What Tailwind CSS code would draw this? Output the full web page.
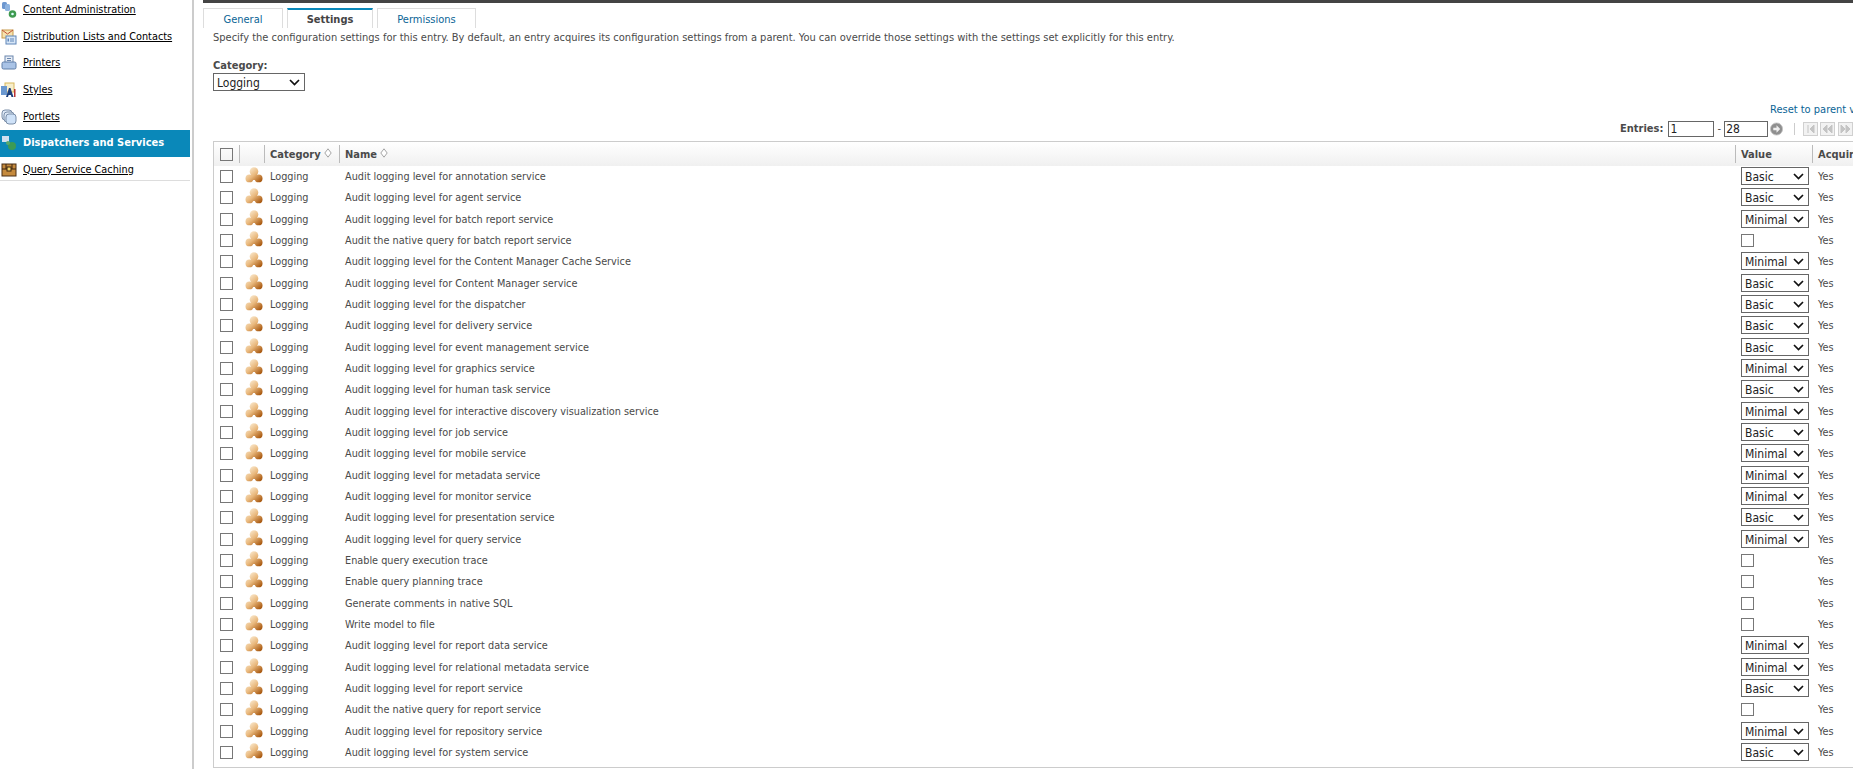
<!DOCTYPE html>
<html><head><meta charset="utf-8"><title>Settings</title>
<script src="https://cdn.jsdelivr.net/npm/@tailwindcss/browser@4"></script></head>
<body class="bg-white w-[1853px] h-[769px] overflow-hidden [font-family:'DejaVu_Sans_Condensed','DejaVu_Sans',sans-serif] text-[11px] text-[#4a4a4a]">
<svg width="0" height="0" class="absolute">
<defs>
<linearGradient id="o" gradientUnits="userSpaceOnUse" x1="3" y1="1" x2="15" y2="15"><stop offset="0" stop-color="#fcefd8"/><stop offset=".5" stop-color="#e9b87c"/><stop offset="1" stop-color="#a8580f"/></linearGradient>
<symbol id="entry" viewBox="0 0 18 16"><g fill="url(#o)"><circle cx="9" cy="4.500" r="4.300"/><circle cx="4.400" cy="11.400" r="3.900"/><circle cx="13.600" cy="11.400" r="3.900"/><path d="M6 7h6l1 6H5Z"/></g></symbol>
<symbol id="sort" viewBox="0 0 8 10"><path d="M4 .8 7.200 5 4 9.200 .8 5Z" fill="#fff" stroke="#a5a5a5"/></symbol>
<symbol id="chev" viewBox="0 0 11 7"><path d="M1 1l4.500 4.500L10 1" fill="none" stroke="#111" stroke-width="1.700"/></symbol>
</defs></svg>
<div class="flex h-full">
<aside class="w-[192px] shrink-0 text-black">
  <nav class="h-[184px] border-b border-[#ddd] w-[190px] text-[10.8px] [&>a]:flex [&>a]:items-center [&>a]:h-[26.6px] [&>a]:pl-[23px] [&>a]:relative [&_svg]:absolute [&_svg]:left-[1px] [&_svg]:w-[16px] [&_svg]:h-[16px] [&_span]:underline">
    <a class="-mt-[3px]"><svg viewBox="0 0 16 16"><rect x="1" y="0" width="5" height="7" rx="1.500" fill="#6d97cf"/><rect x="4" y="2" width="5" height="7" rx="1.500" fill="#8fb4e0"/><circle cx="11.500" cy="12" r="3.800" fill="#3f9a4f"/><circle cx="11.500" cy="12" r="1.300" fill="#dff"/></svg><span>Content Administration</span></a>
    <a><svg viewBox="0 0 16 16"><rect x="1" y="1" width="11" height="8" fill="#f7e3ae" stroke="#c79a4a"/><path d="M1 1l5.500 4L12 1" fill="none" stroke="#c0523a"/><rect x="5" y="7" width="10" height="8" fill="#d7e6f7" stroke="#5f86b8"/><path d="M9 10h4M9 12h4" stroke="#5f86b8"/><rect x="6.500" y="9.500" width="1.500" height="3" fill="#5f86b8"/></svg><span>Distribution Lists and Contacts</span></a>
    <a><svg viewBox="0 0 16 16"><rect x="4" y="1" width="8" height="7" fill="#e8eef7" stroke="#6a86ad"/><path d="M6 3.500h4M6 5.500h4" stroke="#6a86ad"/><rect x="1" y="7" width="14" height="7" rx="1.500" fill="#a9c3e6" stroke="#5f7ea8"/></svg><span>Printers</span></a>
    <a><svg viewBox="0 0 16 16"><rect x="4" y="1" width="9" height="9" fill="#f7eecb" stroke="#d9b75a"/><rect x="0" y="4" width="6" height="9" fill="#6b98cf"/><path d="M5 15l3-9h1.500l3 9h-2l-.6-2H7.600L7 15Z" fill="#1c3e7a"/><rect x="13" y="7" width="1.500" height="8" fill="#b33"/></svg><span>Styles</span></a>
    <a><svg viewBox="0 0 16 16"><rect x="1" y="1" width="10" height="10" rx="3" fill="#dde8f6" stroke="#7b8fa9"/><rect x="3" y="3" width="10" height="10" rx="3" fill="#dde8f6" stroke="#7b8fa9"/><rect x="5" y="5" width="10" height="10" rx="3" fill="#cfe2f8" stroke="#7b8fa9"/></svg><span>Portlets</span></a>
    <a class="bg-[#0a88b9] text-white pl-[24px] text-[11px]"><svg viewBox="0 0 16 16"><rect x="1" y="1" width="7" height="6" fill="#cfe0f0"/><circle cx="11" cy="11" r="4" fill="#3c9a55"/><circle cx="7" cy="8" r="2" fill="#59a86b"/></svg><b class="font-bold">Dispatchers and Services</b></a>
    <a><svg viewBox="0 0 16 16"><rect x="1" y="2" width="14" height="12" fill="#c58a3d" stroke="#4a2f14"/><path d="M1 7h14M5 2v5M11 2v5" stroke="#3b2410"/><rect x="6" y="5" width="4" height="4" fill="#f3d36a" stroke="#3b2410"/></svg><span>Query Service Caching</span></a>
  </nav>
</aside>
<div class="w-[2px] h-full bg-[#ccc] shrink-0"></div>
<main class="flex-1 min-w-0 pl-[9px]">
  <div class="h-[3px] bg-[#444]"></div>
  <div class="flex gap-[4px] mt-[5px] h-[20px] text-center text-[#0a6496]">
    <a class="w-[80px] border border-b-0 border-[#ddd] leading-[21px]">General</a>
    <a class="w-[86px] border border-b-0 border-[#ddd] border-t-2 border-t-[#0a88b9] font-bold text-[#444] leading-[20px] bg-white">Settings</a>
    <a class="w-[99px] border border-b-0 border-[#ddd] leading-[21px]">Permissions</a>
  </div>
  <div class="pl-[10px]">
    <p class="h-[16px] mt-[2px] leading-[16px]">Specify the configuration settings for this entry. By default, an entry acquires its configuration settings from a parent. You can override those settings with the settings set explicitly for this entry.</p>
    <p class="mt-[13px] h-[14px] leading-[14px] font-bold">Category:</p>
    <span class="relative block w-[92px] h-[18px]"><select class="appearance-none w-full h-full border border-[#666] pl-[3px] text-[12px] text-[#222] bg-white"><option>Logging</option></select><svg class="absolute right-[5px] top-[6px] w-[11px] h-[7px]"><use href="#chev"/></svg></span>
    <div class="h-[13px] mt-[12px] pl-[1557px] whitespace-nowrap text-[#0a6496] leading-[13px]">Reset to parent value</div>
    <div class="flex items-center h-[16px] mt-[5px] pl-[1407px] whitespace-nowrap">
      <b class="font-bold">Entries:</b>
      <input value="1" class="ml-[5px] w-[46px] h-[16px] border border-[#666] pl-[1px] text-[12px] text-[#222]">
      <span class="w-[12px] text-center">-</span>
      <input value="28" class="w-[44px] h-[16px] border border-[#666] pl-[1px] text-[12px] text-[#222]">
      <svg class="ml-[2px]" width="16" height="16" viewBox="0 0 16 16"><circle cx="8" cy="8" r="7.500" fill="#8f8f8f" stroke="#c4c4c4"/><path d="M4 6.500h4V3.500l4.500 4.500L8 12.500v-3H4Z" fill="#eee"/></svg>
      <span class="ml-[11px] w-px h-[12px] bg-[#ccc]"></span>
      <svg class="ml-[8px] shrink-0" width="50" height="14" viewBox="0 0 50 14"><g fill="#f2f2f2" stroke="#d0d0d0"><rect x=".5" y=".5" width="14" height="13"/><rect x="17.500" y=".5" width="14" height="13"/><rect x="35.500" y=".5" width="14" height="13"/></g><path d="M5 3v8M11 3l-4 4 4 4ZM24 3l-4 4 4 4ZM29 3l-4 4 4 4ZM38 3l4 4-4 4ZM43 3l4 4-4 4Z" fill="#c4c4c4" stroke="#c4c4c4"/></svg>
    </div>
    <div class="mt-[4px] w-[1760px] h-[627px] border border-[#ccc] text-[10.8px] [&>div]:grid [&>div]:grid-cols-[25px_25px_75px_1396px_77px_1fr] [&>div]:items-center [&>div:not(:first-child)]:h-[21.33px] [&_input]:appearance-none [&_input]:w-[13px] [&_input]:h-[13px] [&_input]:border [&_input]:border-[#777] [&_input]:ml-[6px] [&_input]:block [&_select]:appearance-none [&_select]:w-[68px] [&_select]:h-[18px] [&_select]:border [&_select]:border-[#666] [&_select]:pl-[3px] [&_select]:text-[12px] [&_select]:text-[#222] [&_select]:bg-white [&_label]:relative [&_label]:block [&_label]:w-[68px] [&_label]:ml-[6px] [&_.n]:pl-[6px] [&_.n]:pt-[1px] [&_.c]:pl-[6px] [&_.c]:pt-[1px] [&_.y]:pl-[6px] [&_.y]:pt-[1px] [&_.i]:ml-[6px] [&_.i]:w-[18px] [&_.i]:h-[16px] [&_.i]:-mt-[3px] [&_.ch]:absolute [&_.ch]:right-[5px] [&_.ch]:top-[6px] [&_.ch]:w-[11px] [&_.ch]:h-[7px]">
      <div class="h-[24px] font-bold text-[11px] bg-gradient-to-b from-white to-[#f0f0f0] [&>span]:h-[18px] [&>span]:flex [&>span]:items-center [&>span]:border-l [&>span]:border-[#bbb] [&>span]:pt-[2px]">
        <input type="checkbox" aria-label="Select all">
        <span></span>
        <span class="pl-[5px]">Category<svg class="ml-[3px] -mt-[4px]" width="8" height="10"><use href="#sort"/></svg></span>
        <span class="pl-[5px]">Name<svg class="ml-[3px] -mt-[4px]" width="8" height="10"><use href="#sort"/></svg></span>
        <span class="pl-[5px]">Value</span>
        <span class="pl-[5px]">Acquired</span>
      </div>
      <div><input type="checkbox"><svg class="i"><use href="#entry"/></svg><span class="c">Logging</span><span class="n">Audit logging level for annotation service</span><span class="v"><label><select><option>Basic</option></select><svg class="ch"><use href="#chev"/></svg></label></span><span class="y">Yes</span></div>
      <div><input type="checkbox"><svg class="i"><use href="#entry"/></svg><span class="c">Logging</span><span class="n">Audit logging level for agent service</span><span class="v"><label><select><option>Basic</option></select><svg class="ch"><use href="#chev"/></svg></label></span><span class="y">Yes</span></div>
      <div><input type="checkbox"><svg class="i"><use href="#entry"/></svg><span class="c">Logging</span><span class="n">Audit logging level for batch report service</span><span class="v"><label><select><option>Minimal</option></select><svg class="ch"><use href="#chev"/></svg></label></span><span class="y">Yes</span></div>
      <div><input type="checkbox"><svg class="i"><use href="#entry"/></svg><span class="c">Logging</span><span class="n">Audit the native query for batch report service</span><span class="v"><input type="checkbox"></span><span class="y">Yes</span></div>
      <div><input type="checkbox"><svg class="i"><use href="#entry"/></svg><span class="c">Logging</span><span class="n">Audit logging level for the Content Manager Cache Service</span><span class="v"><label><select><option>Minimal</option></select><svg class="ch"><use href="#chev"/></svg></label></span><span class="y">Yes</span></div>
      <div><input type="checkbox"><svg class="i"><use href="#entry"/></svg><span class="c">Logging</span><span class="n">Audit logging level for Content Manager service</span><span class="v"><label><select><option>Basic</option></select><svg class="ch"><use href="#chev"/></svg></label></span><span class="y">Yes</span></div>
      <div><input type="checkbox"><svg class="i"><use href="#entry"/></svg><span class="c">Logging</span><span class="n">Audit logging level for the dispatcher</span><span class="v"><label><select><option>Basic</option></select><svg class="ch"><use href="#chev"/></svg></label></span><span class="y">Yes</span></div>
      <div><input type="checkbox"><svg class="i"><use href="#entry"/></svg><span class="c">Logging</span><span class="n">Audit logging level for delivery service</span><span class="v"><label><select><option>Basic</option></select><svg class="ch"><use href="#chev"/></svg></label></span><span class="y">Yes</span></div>
      <div><input type="checkbox"><svg class="i"><use href="#entry"/></svg><span class="c">Logging</span><span class="n">Audit logging level for event management service</span><span class="v"><label><select><option>Basic</option></select><svg class="ch"><use href="#chev"/></svg></label></span><span class="y">Yes</span></div>
      <div><input type="checkbox"><svg class="i"><use href="#entry"/></svg><span class="c">Logging</span><span class="n">Audit logging level for graphics service</span><span class="v"><label><select><option>Minimal</option></select><svg class="ch"><use href="#chev"/></svg></label></span><span class="y">Yes</span></div>
      <div><input type="checkbox"><svg class="i"><use href="#entry"/></svg><span class="c">Logging</span><span class="n">Audit logging level for human task service</span><span class="v"><label><select><option>Basic</option></select><svg class="ch"><use href="#chev"/></svg></label></span><span class="y">Yes</span></div>
      <div><input type="checkbox"><svg class="i"><use href="#entry"/></svg><span class="c">Logging</span><span class="n">Audit logging level for interactive discovery visualization service</span><span class="v"><label><select><option>Minimal</option></select><svg class="ch"><use href="#chev"/></svg></label></span><span class="y">Yes</span></div>
      <div><input type="checkbox"><svg class="i"><use href="#entry"/></svg><span class="c">Logging</span><span class="n">Audit logging level for job service</span><span class="v"><label><select><option>Basic</option></select><svg class="ch"><use href="#chev"/></svg></label></span><span class="y">Yes</span></div>
      <div><input type="checkbox"><svg class="i"><use href="#entry"/></svg><span class="c">Logging</span><span class="n">Audit logging level for mobile service</span><span class="v"><label><select><option>Minimal</option></select><svg class="ch"><use href="#chev"/></svg></label></span><span class="y">Yes</span></div>
      <div><input type="checkbox"><svg class="i"><use href="#entry"/></svg><span class="c">Logging</span><span class="n">Audit logging level for metadata service</span><span class="v"><label><select><option>Minimal</option></select><svg class="ch"><use href="#chev"/></svg></label></span><span class="y">Yes</span></div>
      <div><input type="checkbox"><svg class="i"><use href="#entry"/></svg><span class="c">Logging</span><span class="n">Audit logging level for monitor service</span><span class="v"><label><select><option>Minimal</option></select><svg class="ch"><use href="#chev"/></svg></label></span><span class="y">Yes</span></div>
      <div><input type="checkbox"><svg class="i"><use href="#entry"/></svg><span class="c">Logging</span><span class="n">Audit logging level for presentation service</span><span class="v"><label><select><option>Basic</option></select><svg class="ch"><use href="#chev"/></svg></label></span><span class="y">Yes</span></div>
      <div><input type="checkbox"><svg class="i"><use href="#entry"/></svg><span class="c">Logging</span><span class="n">Audit logging level for query service</span><span class="v"><label><select><option>Minimal</option></select><svg class="ch"><use href="#chev"/></svg></label></span><span class="y">Yes</span></div>
      <div><input type="checkbox"><svg class="i"><use href="#entry"/></svg><span class="c">Logging</span><span class="n">Enable query execution trace</span><span class="v"><input type="checkbox"></span><span class="y">Yes</span></div>
      <div><input type="checkbox"><svg class="i"><use href="#entry"/></svg><span class="c">Logging</span><span class="n">Enable query planning trace</span><span class="v"><input type="checkbox"></span><span class="y">Yes</span></div>
      <div><input type="checkbox"><svg class="i"><use href="#entry"/></svg><span class="c">Logging</span><span class="n">Generate comments in native SQL</span><span class="v"><input type="checkbox"></span><span class="y">Yes</span></div>
      <div><input type="checkbox"><svg class="i"><use href="#entry"/></svg><span class="c">Logging</span><span class="n">Write model to file</span><span class="v"><input type="checkbox"></span><span class="y">Yes</span></div>
      <div><input type="checkbox"><svg class="i"><use href="#entry"/></svg><span class="c">Logging</span><span class="n">Audit logging level for report data service</span><span class="v"><label><select><option>Minimal</option></select><svg class="ch"><use href="#chev"/></svg></label></span><span class="y">Yes</span></div>
      <div><input type="checkbox"><svg class="i"><use href="#entry"/></svg><span class="c">Logging</span><span class="n">Audit logging level for relational metadata service</span><span class="v"><label><select><option>Minimal</option></select><svg class="ch"><use href="#chev"/></svg></label></span><span class="y">Yes</span></div>
      <div><input type="checkbox"><svg class="i"><use href="#entry"/></svg><span class="c">Logging</span><span class="n">Audit logging level for report service</span><span class="v"><label><select><option>Basic</option></select><svg class="ch"><use href="#chev"/></svg></label></span><span class="y">Yes</span></div>
      <div><input type="checkbox"><svg class="i"><use href="#entry"/></svg><span class="c">Logging</span><span class="n">Audit the native query for report service</span><span class="v"><input type="checkbox"></span><span class="y">Yes</span></div>
      <div><input type="checkbox"><svg class="i"><use href="#entry"/></svg><span class="c">Logging</span><span class="n">Audit logging level for repository service</span><span class="v"><label><select><option>Minimal</option></select><svg class="ch"><use href="#chev"/></svg></label></span><span class="y">Yes</span></div>
      <div><input type="checkbox"><svg class="i"><use href="#entry"/></svg><span class="c">Logging</span><span class="n">Audit logging level for system service</span><span class="v"><label><select><option>Basic</option></select><svg class="ch"><use href="#chev"/></svg></label></span><span class="y">Yes</span></div>
    </div>
  </div>
</main>
</div>
</body></html>
